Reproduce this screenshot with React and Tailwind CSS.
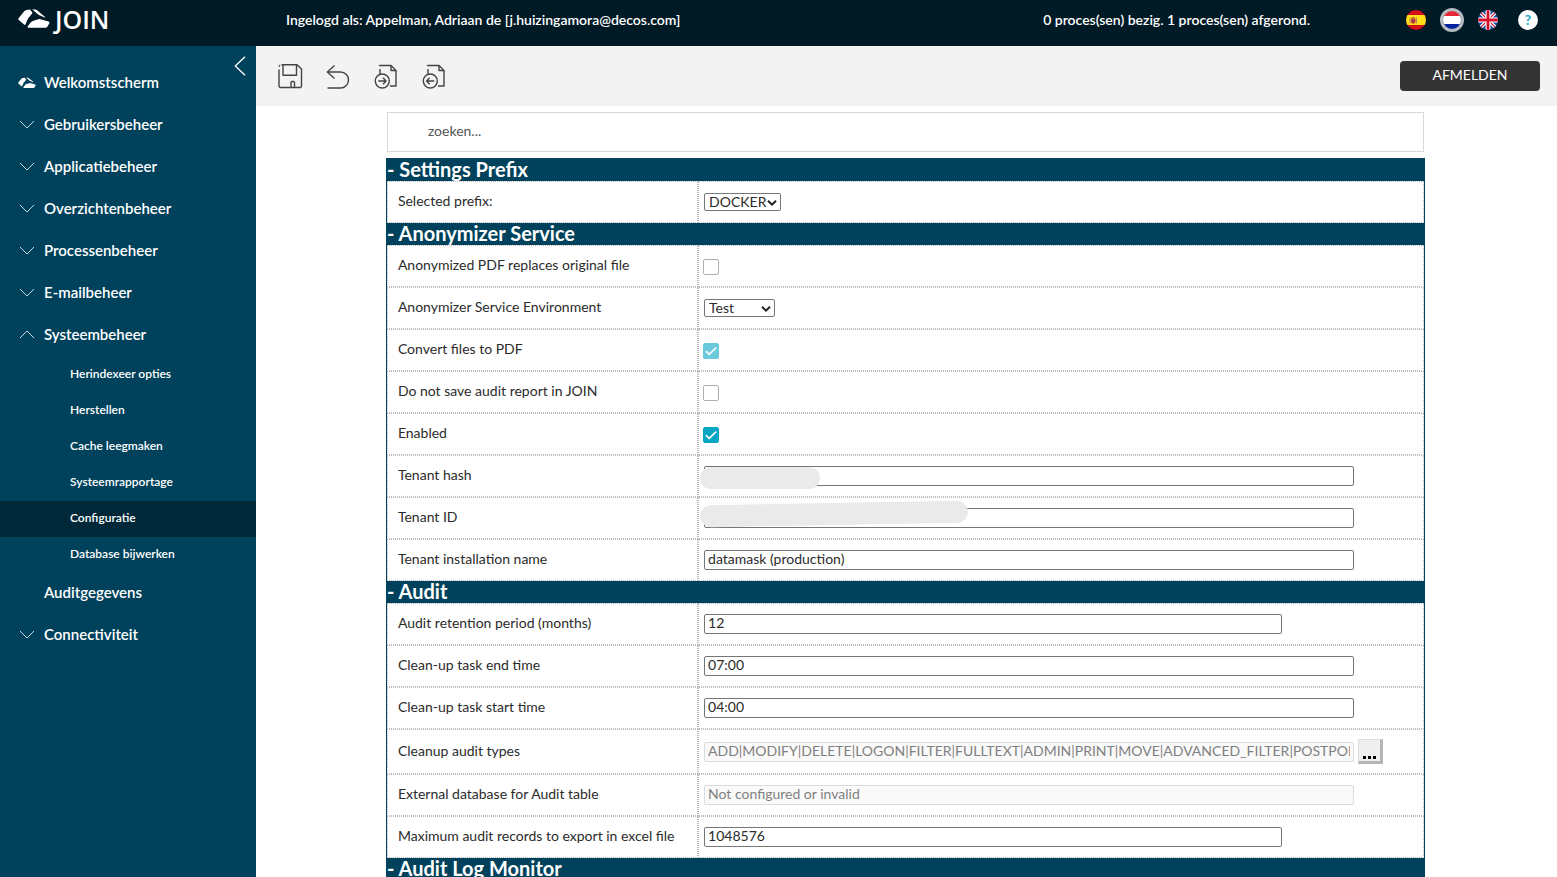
import React, { useState } from 'react';
import clsx from 'clsx';

const menu = [
    { label: 'Welkomstscherm', icon: 'logo' },
    { label: 'Gebruikersbeheer', icon: 'down' },
    { label: 'Applicatiebeheer', icon: 'down' },
    { label: 'Overzichtenbeheer', icon: 'down' },
    { label: 'Processenbeheer', icon: 'down' },
    { label: 'E-mailbeheer', icon: 'down' },
    {
        label: 'Systeembeheer',
        icon: 'up',
        children: [
            'Herindexeer opties',
            'Herstellen',
            'Cache leegmaken',
            'Systeemrapportage',
            'Configuratie',
            'Database bijwerken'
        ]
    },
    { label: 'Auditgegevens' },
    { label: 'Connectiviteit', icon: 'down' }
];

const sections = [
    {
        title: 'Settings Prefix',
        rows: [
            { id: 'prefix', label: 'Selected prefix:', type: 'select', value: 'DOCKER', width: 'w-[77px]' }
        ]
    },
    {
        title: 'Anonymizer Service',
        rows: [
            { id: 'replacePdf', label: 'Anonymized PDF replaces original file', type: 'checkbox' },
            { id: 'environment', label: 'Anonymizer Service Environment', type: 'select', value: 'Test', width: 'w-[71px]' },
            { id: 'convert', label: 'Convert files to PDF', type: 'checkbox', value: true, disabled: true },
            { id: 'noReport', label: 'Do not save audit report in JOIN', type: 'checkbox' },
            { id: 'enabled', label: 'Enabled', type: 'checkbox', value: true },
            { id: 'tenantHash', label: 'Tenant hash', type: 'text', value: '', mask: 'top-[11px] left-px w-30' },
            { id: 'tenantId', label: 'Tenant ID', type: 'text', value: '', mask: 'top-[5px] left-px w-[268px] -rotate-1' },
            { id: 'tenantName', label: 'Tenant installation name', type: 'text', value: 'datamask (production)' }
        ]
    },
    {
        title: 'Audit',
        rows: [
            { id: 'retention', label: 'Audit retention period (months)', type: 'text', value: '12', short: true },
            { id: 'endTime', label: 'Clean-up task end time', type: 'text', value: '07:00' },
            { id: 'startTime', label: 'Clean-up task start time', type: 'text', value: '04:00' },
            {
                id: 'auditTypes',
                label: 'Cleanup audit types',
                type: 'text',
                value: 'ADD|MODIFY|DELETE|LOGON|FILTER|FULLTEXT|ADMIN|PRINT|MOVE|ADVANCED_FILTER|POSTPONED|FINISHED',
                disabled: true,
                browse: true
            },
            { id: 'externalDb', label: 'External database for Audit table', type: 'text', value: 'Not configured or invalid', disabled: true },
            { id: 'maxRecords', label: 'Maximum audit records to export in excel file', type: 'text', value: '1048576', short: true }
        ]
    },
    { title: 'Audit Log Monitor', rows: [] }
];

const LogoMark = ({ className }) => (
    <svg viewBox="0 0 32 20" className={className} fill="currentColor" aria-hidden="true">
        <path d="M0.3 10.6 Q0 10 0.6 9.2 L6 2.6 Q7 1.4 8.6 1.1 L12 0.5 L14.2 3.2 Q14.6 3.8 14.2 4.5 L10 9.6 L7.4 15.6 Q6.8 16.2 6 15.6 Z" />
        <path d="M14.2 0.4 L17.4 0.6 Q18.4 0.8 19.4 1.6 L27.6 8.4 L26.6 8.6 L20.8 6 Z" />
        <path d="M9.6 17.6 L12.6 13.4 Q13.4 12.4 14.8 11.9 L20.2 10.3 Q21.4 9.9 22.6 10.3 L30.6 12.6 Q31.8 13.2 31.4 14.2 L29.2 18 Q28.6 18.8 27.4 18.8 L10.2 18.8 Q9.2 18.6 9.6 17.6 Z" />
    </svg>
);

const Chevron = ({ up }) => (
    <svg viewBox="0 0 16 9" className="h-[9px] w-4" fill="none" stroke="#c5d8e0" aria-hidden="true">
        <path d={up ? 'M1 8 L8 1 L15 8' : 'M1 1 L8 8 L15 1'} />
    </svg>
);

const SpainFlag = () => (
    <svg viewBox="0 0 20 20" className="size-5 rounded-full" aria-hidden="true">
        <rect width="20" height="20" fill="#d80f15" />
        <rect y="5" width="20" height="10" fill="#ffe01b" />
        <path d="M3.5 7.5h1v6h-1zM10 7.5h1v6h-1z" fill="#b08a5a" />
        <path d="M5 8.5h4.5v3a2.2 2.2 0 0 1-4.5 0z" fill="#c2382e" />
        <path d="M5.4 8.2q2-2.6 3.8 0z" fill="#a0522d" />
        <circle cx="7.3" cy="11" r="1" fill="#6b4a8a" />
    </svg>
);

const DutchFlag = () => (
    <svg viewBox="0 0 18 18" className="size-[18px] rounded-full" aria-hidden="true">
        <rect width="18" height="18" fill="#fff" />
        <rect width="18" height="5" fill="#e8283a" />
        <rect y="13" width="18" height="5" fill="#00239c" />
    </svg>
);

const BritishFlag = () => (
    <svg viewBox="0 0 20 20" className="size-5 rounded-full" aria-hidden="true">
        <rect width="20" height="20" fill="#1a4fa3" />
        <path d="M0 0L20 20M20 0L0 20" stroke="#fff" strokeWidth="3.4" />
        <path d="M0 0L20 20M20 0L0 20" stroke="#d8112f" strokeWidth="1.2" />
        <path d="M10 0v20M0 10h20" stroke="#fff" strokeWidth="5" />
        <path d="M10 0v20M0 10h20" stroke="#d8112f" strokeWidth="2.8" />
    </svg>
);

const toolIcons = [
    {
        name: 'Opslaan',
        paths: ['M1 5.5V22.5L2 23.5H22.5L23.5 22.5V5L19 0.7H3.5M1 2.6L2 1.2', 'M5 1V11.3H18.5V1', 'M13 23V18.2L13.8 17.5H15.7L16.5 18.2V23']
    },
    {
        name: 'Ongedaan maken',
        paths: ['M8.5 1.5L1.3 8L8.5 14.5', 'M2 8H14.5A8 8 0 0 1 14.5 24H1.5']
    },
    {
        name: 'Exporteren',
        paths: ['M6 10V5M5 1.5H17L22 6.5V22H16', 'M17 1.5V6.5H22', 'M15.3 17A7 7 0 1 1 1.3 17A7 7 0 1 1 15.3 17Z', 'M4.3 17H12M9 13.8L12 17L9 20.2']
    },
    {
        name: 'Importeren',
        paths: ['M6 10V5M5 1.5H17L22 6.5V22H16', 'M17 1.5V6.5H22', 'M15.3 17A7 7 0 1 1 1.3 17A7 7 0 1 1 15.3 17Z', 'M12.3 17H4.6M7.6 13.8L4.6 17L7.6 20.2']
    }
];

const Header = () => (
    <header className="flex h-[46px] shrink-0 items-center bg-[#001a26] text-white">
        <a href="#" className="flex w-[286px] shrink-0 items-center gap-[5px] pb-2 pl-[18px]">
            <LogoMark className="h-5 w-8" />
            <span className="font-['Open_Sans',sans-serif] text-[25px] leading-9 font-semibold">JOIN</span>
        </a>
        <p className="pb-1.5 text-sm font-semibold">Ingelogd als: Appelman, Adriaan de [j.huizingamora@decos.com]</p>
        <p className="mr-24 ml-auto pb-1.5 text-sm font-semibold">0 proces(sen) bezig. 1 proces(sen) afgerond.</p>
        <div className="flex items-center gap-3.5 pr-[19px] pb-1.5">
            <button type="button" aria-label="Español"><SpainFlag /></button>
            <button type="button" aria-label="Nederlands" className="rounded-full border-3 border-[#b4bcc2]"><DutchFlag /></button>
            <button type="button" aria-label="English"><BritishFlag /></button>
            <button type="button" aria-label="Help" className="ml-1.5 size-5 rounded-full bg-white text-sm leading-5 font-bold text-[#1aa9c4]">?</button>
        </div>
    </header>
);

const Sidebar = () => (
    <nav className="relative w-64 shrink-0 bg-[#00425c] pt-[17px] text-white">
        <button type="button" aria-label="Menu inklappen" className="absolute top-2.5 right-2.5">
            <svg viewBox="0 0 12 20" className="h-5 w-3" fill="none" stroke="currentColor" strokeWidth="1.3">
                <path d="M11 0.7L1.3 10L11 19.3" />
            </svg>
        </button>
        <ul>
            {menu.map((item) => (
                <li key={item.label}>
                    <a href="#" className="flex h-[42px] items-center gap-[9px] pb-[3px] pl-[19px] text-[15px] font-semibold">
                        <span className="flex w-4 shrink-0 justify-center">
                            {item.icon === 'logo' && <LogoMark className="h-3 w-[18px] shrink-0" />}
                            {item.icon === 'down' && <Chevron />}
                            {item.icon === 'up' && <Chevron up />}
                        </span>
                        {item.label}
                    </a>
                    {item.children && (
                        <ul>
                            {item.children.map((child) => (
                                <li key={child}>
                                    <a
                                        href="#"
                                        className={clsx(
                                            'flex h-9 items-center pb-0.5 pl-[70px] text-xs font-semibold',
                                            child === 'Configuratie' && 'bg-[#002838]'
                                        )}
                                    >
                                        {child}
                                    </a>
                                </li>
                            ))}
                        </ul>
                    )}
                </li>
            ))}
        </ul>
    </nav>
);

const Toolbar = () => (
    <div className="flex h-15 items-center bg-[#f3f3f3] pr-[17px] pl-[22px]">
        <div className="flex gap-[22px] pt-0.5">
            {toolIcons.map((icon) => (
                <button key={icon.name} type="button" aria-label={icon.name}>
                    <svg viewBox="0 0 26 26" className="size-[26px]" fill="none" stroke="#444" strokeWidth="1.4" strokeLinejoin="round">
                        {icon.paths.map((d) => <path key={d} d={d} />)}
                    </svg>
                </button>
            ))}
        </div>
        <button type="button" className="ml-auto h-[30px] w-35 rounded bg-[#333] pb-0.5 text-sm text-white">AFMELDEN</button>
    </div>
);

const Field = ({ row, value, onChange }) => {
    if (row.type === 'select') {
        return (
            <span className={clsx('relative block', row.width)}>
                <select
                    id={row.id}
                    value={value}
                    onChange={(e) => onChange(row.id, e.target.value)}
                    className="block h-[18px] w-full appearance-none rounded-[2px] border border-[#767676] bg-white pl-1 text-sm leading-4"
                >
                    <option>{row.value}</option>
                </select>
                <svg viewBox="0 0 10 6" className="pointer-events-none absolute top-[7px] right-1 h-1.5 w-2.5" fill="none" stroke="#222" strokeWidth="2">
                    <path d="M1 0.8L5 4.6L9 0.8" />
                </svg>
            </span>
        );
    }

    if (row.type === 'checkbox') {
        return (
            <span className="relative mt-0.5 -ml-px block size-4">
                <input
                    id={row.id}
                    type="checkbox"
                    checked={value}
                    disabled={row.disabled}
                    onChange={(e) => onChange(row.id, e.target.checked)}
                    className="block size-4 appearance-none rounded-[2px] border border-[#b0b0b0] bg-white checked:border-[#09a5c4] checked:bg-[#09a5c4] disabled:border-[#6bc9dc] disabled:bg-[#6bc9dc]"
                />
                {value && (
                    <svg viewBox="0 0 16 16" className="pointer-events-none absolute inset-0 size-4" fill="none" stroke="#fff" strokeWidth="1.6">
                        <path d="M2.8 8.2L6.2 11.4L13.2 4.6" />
                    </svg>
                )}
            </span>
        );
    }

    return (
        <div className="flex items-center gap-1">
            <input
                id={row.id}
                type="text"
                value={value}
                disabled={row.disabled}
                onChange={(e) => onChange(row.id, e.target.value)}
                className={clsx(
                    'block h-5 rounded-[2px] border border-[#767676] bg-white px-[3px] pb-[3px] text-sm leading-4 disabled:border-[#dcdcdc] disabled:bg-[#fafafa] disabled:text-[#808080]',
                    row.short ? 'w-[81%]' : 'w-[91%]'
                )}
            />
            {row.browse && (
                <button
                    type="button"
                    aria-label="Bladeren"
                    className="flex size-[25px] items-end justify-center border-t border-r-3 border-b-3 border-l border-t-[#ddd] border-r-[#b5b5b5] border-b-[#b5b5b5] border-l-[#ddd] bg-[#efefef] pb-0.5"
                >
                    <svg viewBox="0 0 13 3" className="h-[3px] w-[13px]" fill="#000">
                        <path d="M0 0h3v3H0zM5 0h3v3H5zM10 0h3v3h-3z" />
                    </svg>
                </button>
            )}
        </div>
    );
};

const App = () => {

    const [formData, setFormData] = useState(() => {
        const initial = {};
        sections.forEach((section) => section.rows.forEach((row) => {
            initial[row.id] = row.value ?? false;
        }));
        return initial;
    });
    const [closed, setClosed] = useState({});

    const handleChange = (id, value) => {
        setFormData({ ...formData, [id]: value });
    };

    const toggle = (title) => {
        setClosed({ ...closed, [title]: !closed[title] });
    };

    return (
        <div className="flex h-screen flex-col bg-white font-['Lato',sans-serif] text-[#2b2b2b]">
            <Header />
            <div className="flex min-h-0 flex-1">
                <Sidebar />
                <main className="min-w-0 flex-1 overflow-y-auto [scrollbar-width:none]">
                    <Toolbar />
                    <div className="pt-1.5 pr-0.5">
                        <div className="mx-auto w-4/5">
                            <input
                                type="search"
                                aria-label="Zoeken"
                                placeholder="zoeken..."
                                className="mx-px mb-1.5 block h-10 w-[calc(100%-2px)] border border-[#d8d8d8] pr-4 pb-1 pl-10 text-sm outline-none placeholder:text-[#555]"
                            />
                            <div className="border-x border-t border-[#00425c]">
                                {sections.map((section) => (
                                    <section key={section.title}>
                                        <h2 className="h-[22px] bg-[#00425c] text-xl leading-5 font-bold text-white">
                                            <button type="button" className="block w-full text-left" onClick={() => toggle(section.title)}>
                                                {closed[section.title] ? '+' : '-'} {section.title}
                                            </button>
                                        </h2>
                                        {!closed[section.title] && section.rows.length > 0 && (
                                            <table className="w-full table-fixed border-separate border-spacing-0 text-sm">
                                                <tbody>
                                                    {section.rows.map((row) => (
                                                        <tr key={row.id} className={row.browse ? 'h-[45px]' : 'h-[42px]'}>
                                                            <th scope="row" className="w-[30%] border border-dotted border-[#bbb] pb-0.5 pl-2.5 text-left font-normal">
                                                                <label htmlFor={row.id}>{row.label}</label>
                                                            </th>
                                                            <td className="relative border border-dotted border-[#bbb] px-[5px] py-0">
                                                                <Field row={row} value={formData[row.id]} onChange={handleChange} />
                                                                {row.mask && (
                                                                    <span className={clsx('absolute h-[22px] rounded-full bg-[#eaeaea]', row.mask)} />
                                                                )}
                                                            </td>
                                                        </tr>
                                                    ))}
                                                </tbody>
                                            </table>
                                        )}
                                    </section>
                                ))}
                            </div>
                        </div>
                    </div>
                </main>
            </div>
        </div>
    );
};

export default App;
